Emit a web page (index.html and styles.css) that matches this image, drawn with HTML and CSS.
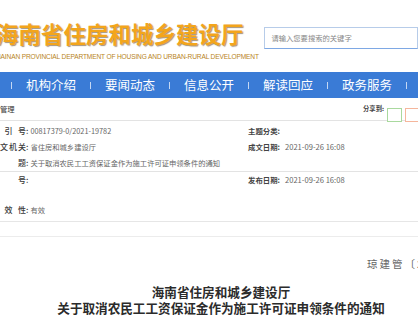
FILE: index.html
```html
<!DOCTYPE html>
<html lang="zh-CN">
<head>
    <meta charset="UTF-8">
    <meta name="viewport" content="width=device-width, initial-scale=1.0">
    <title>关于取消农民工工资保证金作为施工许可证申领条件的通知</title>
    <link rel="stylesheet" href="styles.css">
</head>
<body>
    <div class="header">
        <div class="logo">
            <div class="logo-cn">海南省住房和城乡建设厅</div>
            <div class="logo-en">HAINAN PROVINCIAL DEPARTMENT OF HOUSING AND URBAN-RURAL DEVELOPMENT</div>
        </div>
        <div class="search">请输入您要搜索的关键字</div>
    </div>

    <div class="nav">
        <ul>
            <li>首页</li><span class="sep"></span>
            <li>机构介绍</li><span class="sep"></span>
            <li>要闻动态</li><span class="sep"></span>
            <li>信息公开</li><span class="sep"></span>
            <li>解读回应</li><span class="sep"></span>
            <li>政务服务</li><span class="sep"></span>
            <li>互动交流</li>
        </ul>
    </div>

    <div class="main">
        <div class="crumb">
            <span class="crumb-text">管理</span>
            <div class="share">
                <span class="share-label">分享到:</span>
                <span class="share-btn wx"></span>
                <span class="share-btn wb"></span>
            </div>
        </div>

        <div class="info">
            <div class="row">
                <div class="cell-l"><span class="lab">索引号</span>:<span class="val">00817379-0/2021-19782</span></div>
                <div class="cell-r"><span class="lab-r">主题分类:</span></div>
            </div>
            <div class="row">
                <div class="cell-l"><span class="lab">发文机关</span>:<span class="val">省住房和城乡建设厅</span></div>
                <div class="cell-r"><span class="lab-r">成文日期:</span><span class="val">2021-09-26 16:08</span></div>
            </div>
            <div class="row row-title">
                <div class="cell-l"><span class="lab">标题</span>:<span class="val">关于取消农民工工资保证金作为施工许可证申领条件的通知</span></div>
            </div>
            <div class="row row-tall">
                <div class="cell-l"><span class="lab">文号</span>:</div>
                <div class="cell-r"><span class="lab-r">发布日期:</span><span class="val">2021-09-26 16:08</span></div>
            </div>
            <div class="row row-last">
                <div class="cell-l"><span class="lab">有效性</span>:<span class="val">有效</span></div>
            </div>
        </div>

        <div class="content">
            <div class="docnum">琼建管〔2021〕98号</div>
            <h1 class="title">海南省住房和城乡建设厅<br>关于取消农民工工资保证金作为施工许可证申领条件的通知</h1>
        </div>
    </div>
</body>
</html>
```

FILE: styles.css
```css
body {
    margin: 0;
    overflow: hidden;
    background: #fff;
    font-family: "Noto Sans CJK SC", "Liberation Sans", sans-serif;
    color: #333;
}

/* 头部 */
.header {
    display: flex;
    height: 72px;
    margin-left: -4px;
}
.logo {
    width: 295px;
    padding-top: 18px;
}
.logo-cn {
    font-size: 22.5px;
    font-weight: 700;
    line-height: 30px;
    color: #f3a51c;
    text-shadow: 1px 1px 1px rgba(90, 60, 20, 0.55);
    white-space: nowrap;
}
.logo-en {
    width: 249px;
    margin-top: 4px;
    font-family: "Liberation Sans Narrow", "Liberation Sans", sans-serif;
    font-size: 6.6px;
    letter-spacing: -0.15px;
    line-height: 10px;
    color: #b8841c;
    text-align: justify;
    text-align-last: justify;
    white-space: nowrap;
}
.search {
    margin-top: 27px;
    width: 160px;
    height: 20px;
    padding-left: 6px;
    border: 1px solid #b7cce9;
    border-bottom: 1px solid #7ea8e4;
    font-size: 7.3px;
    line-height: 20px;
    color: #888;
    white-space: nowrap;
}

/* 导航 */
.nav {
    height: 26px;
    background: #3a7bd6;
    overflow: hidden;
}
.nav ul {
    display: flex;
    align-items: center;
    height: 26px;
    margin: 0 0 0 -67px;
    padding: 0;
    list-style: none;
}
.nav li {
    flex: none;
    width: 78px;
    text-align: center;
    font-size: 12.5px;
    line-height: 26px;
    color: #fff;
}
.nav .sep {
    flex: none;
    width: 1px;
    height: 7px;
    background: rgba(255, 255, 255, 0.7);
}

/* 正文区 */
.main {
    width: 460px;
    margin-left: -9px;
}
.crumb {
    display: flex;
    height: 22px;
    padding-right: 31px;
    border-bottom: 1px solid #e3e3e3;
}
.crumb-text {
    padding-left: 9px;
    padding-top: 5px;
    font-size: 7.3px;
    line-height: 12px;
    color: #333;
}
.share {
    display: flex;
    margin-left: auto;
    padding-top: 6px;
}
.share-label {
    margin-right: 3px;
    font-size: 6.3px;
    font-weight: 700;
    line-height: 10px;
    color: #444;
}
.share-btn {
    width: 13px;
    height: 12px;
    margin-top: 4px;
    border: 1px solid #a9d99e;
    background: #fff;
}
.share-btn.wb {
    margin-left: 3px;
    border-color: #f5b69c;
}

.info {
    padding-top: 2px;
    border-bottom: 1px solid #e6e6e6;
}
.row {
    display: flex;
    height: 16px;
    line-height: 16px;
    white-space: nowrap;
}
.row-title {
    border-bottom: 1px solid #e3e3e3;
}
.row-tall {
    height: 30px;
}
.row-last {
    height: 19px;
}
.cell-l {
    width: 257px;
    font-size: 8px;
    font-weight: 500;
    color: #3a3a3a;
}
.cell-r {
    font-size: 7.4px;
    font-weight: 700;
    color: #444;
}
.lab {
    display: inline-block;
    width: 35px;
    text-align: justify;
    text-align-last: justify;
}
.lab-r {
    margin-right: 3px;
}
.val {
    margin-left: 2px;
    font-size: 7.3px;
    font-weight: 400;
    color: #666;
}
.cell-r .val {
    font-size: 7.6px;
}

.content {
    margin-top: 14px;
    border-top: 1px solid #ececec;
}
.docnum {
    padding-top: 20px;
    padding-left: 376px;
    font-family: "Liberation Serif", "Noto Sans CJK SC", serif;
    font-size: 10.5px;
    letter-spacing: 2px;
    line-height: 16px;
    color: #666;
    white-space: nowrap;
}
.title {
    margin: 12px 0 0;
    text-align: center;
    font-family: "Liberation Serif", "Noto Sans CJK SC", serif;
    font-size: 12.6px;
    font-weight: 700;
    line-height: 16px;
    color: #2b2b2b;
    white-space: nowrap;
}
```
